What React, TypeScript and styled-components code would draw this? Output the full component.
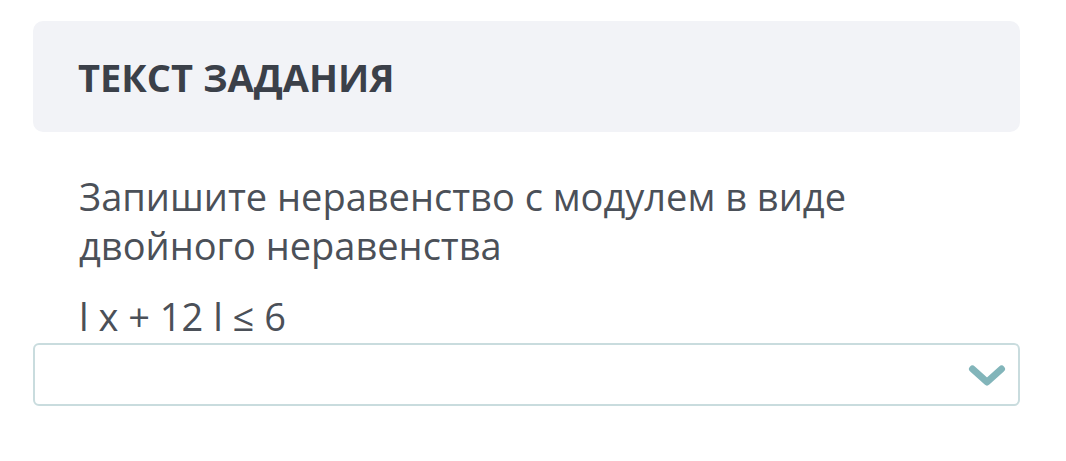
import React from "react";
import styled, { createGlobalStyle } from "styled-components";

const Global = createGlobalStyle`
  html, body { margin: 0; padding: 0; background: #ffffff; }
  body { font-family: "Open Sans", "Noto Sans", sans-serif; }
`;

const Page = styled.div`
  width: 1066px;
  height: 461px;
  padding: 21px 46px 0 33px;
  box-sizing: border-box;
  display: flex;
  flex-direction: column;
`;

const HeaderCard = styled.div`
  height: 111px;
  border-radius: 10px;
  background: #f2f3f7;
  display: flex;
  align-items: center;
  padding-left: 45px;
  box-sizing: border-box;
`;

const Title = styled.h2`
  margin: 0;
  font-family: "Open Sans", sans-serif;
  font-weight: 700;
  font-size: 38px;
  color: #3b4049;
`;

const Body = styled.div`
  padding: 40px 0 0 46px;
  color: #4b5058;
  font-family: "Open Sans", sans-serif;
  font-size: 38px;
`;

const Paragraph = styled.p`
  margin: 0;
  line-height: 49px;
`;

const Formula = styled.p`
  margin: 22px 0 0;
  line-height: 49px;
`;

const SelectBox = styled.div`
  margin-top: 2px;
  height: 63px;
  border: 2px solid #c9dcde;
  border-radius: 6px;
  box-sizing: border-box;
  display: flex;
  align-items: center;
  justify-content: flex-end;
  padding-right: 12px;
`;

const Chevron = () => (
  <svg width="38" height="26" viewBox="0 0 38 26">
    <path
      d="M4.5 7 L19 20 L33.5 7"
      fill="none"
      stroke="#82b5ba"
      strokeWidth="7"
      strokeLinecap="round"
      strokeLinejoin="round"
    />
  </svg>
);

export default function App() {
  return (
    <>
      <Global />
      <Page>
        <HeaderCard>
          <Title>ТЕКСТ ЗАДАНИЯ</Title>
        </HeaderCard>
        <Body>
          <Paragraph>
            Запишите неравенство с модулем в виде
            <br />
            двойного неравенства
          </Paragraph>
          <Formula>l x + 12 l ≤ 6</Formula>
        </Body>
        <SelectBox>
          <Chevron />
        </SelectBox>
      </Page>
    </>
  );
}
